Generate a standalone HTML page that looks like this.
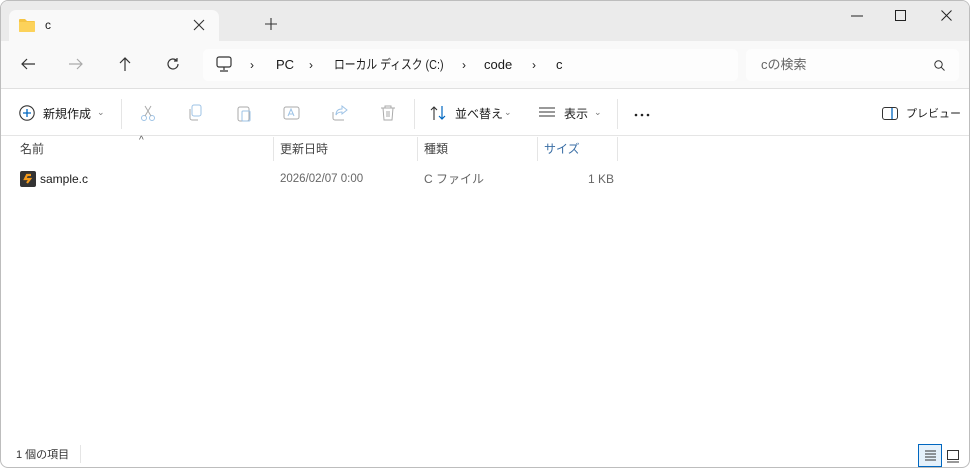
<!DOCTYPE html><html><head><meta charset="utf-8"><style>
*{margin:0;padding:0;box-sizing:border-box}
body{width:970px;height:468px;overflow:hidden;background:#fff;font-family:"Liberation Sans","Noto Sans CJK JP",sans-serif;font-size:12px;color:#1a1a1a;position:relative}
.win{position:absolute;left:0;top:0;width:970px;height:468px;border:1px solid #bdbdbd;border-radius:8px;overflow:hidden;background:#fff}
.title{position:absolute;left:0;top:0;width:970px;height:40px;background:#ebebeb}
.tab{position:absolute;left:8px;top:9px;width:210px;height:31px;background:#f9f9f9;border-radius:7px 7px 0 0}
.nav{position:absolute;left:0;top:40px;width:970px;height:48px;background:#f9f9f9;border-bottom:1px solid #e0e0e0}
.addr{position:absolute;left:202px;top:8px;width:535px;height:32px;background:#fdfdfd;border-radius:5px}
.search{position:absolute;left:745px;top:8px;width:213px;height:32px;background:#fdfdfd;border-radius:5px}
.t{position:absolute;white-space:nowrap;line-height:14px;height:14px}
.tool{position:absolute;left:0;top:88px;width:970px;height:47px;border-bottom:1px solid #e5e5e5}
.sep{position:absolute;width:1px;background:#e5e5e5}
svg{position:absolute}
</style></head><body><div class="win">
<div class="title">
<div class="tab">
<svg style="left:10px;top:8px" width="16" height="14"><path d="M0 2a1 1 0 0 1 1-1h5l2 2h7a1 1 0 0 1 1 1v9a1 1 0 0 1-1 1H1a1 1 0 0 1-1-1z" fill="#f5c443"/><path d="M0 4h16v9a1 1 0 0 1-1 1H1a1 1 0 0 1-1-1z" fill="#fcd25a"/></svg>
<span class="t" style="left:36px;top:8px;font-size:12px">c</span>
<svg style="left:184px;top:9px" width="12" height="12"><path d="M1 1l10 10M11 1L1 11" stroke="#333" stroke-width="1.1"/></svg>
</div>
<svg style="left:264px;top:17px" width="12" height="12"><path d="M6 0v12M0 6h12" stroke="#333" stroke-width="1.1"/></svg>
<svg style="left:850px;top:14px" width="12" height="2"><path d="M0 1h12" stroke="#222"/></svg>
<svg style="left:894px;top:9px" width="11" height="11"><rect x=".5" y=".5" width="10" height="10" fill="none" stroke="#222"/></svg>
<svg style="left:940px;top:9px" width="11" height="11"><path d="M.5.5l10 10M10.5.5l-10 10" stroke="#222"/></svg>
</div>
<div class="nav">
<svg style="left:19px;top:15px" width="16" height="16"><path d="M15 8H2M7 3L2 8l5 5" stroke="#333" stroke-width="1.2" fill="none"/></svg>
<svg style="left:67px;top:15px" width="16" height="16"><path d="M1 8h13M9 3l5 5-5 5" stroke="#aaa" stroke-width="1.2" fill="none"/></svg>
<svg style="left:116px;top:15px" width="16" height="16"><path d="M8 15V2M3 7l5-5 5 5" stroke="#333" stroke-width="1.2" fill="none"/></svg>
<svg style="left:164px;top:15px" width="16" height="16"><path d="M13 8a5 5 0 1 1-1.5-3.6M12 2v3H9" stroke="#333" stroke-width="1.2" fill="none"/></svg>
<div class="addr">
<svg style="left:13px;top:7px" width="16" height="18"><rect x="1" y="1" width="14" height="10" rx="2" fill="none" stroke="#333" stroke-width="1.2"/><path d="M8 11v3M4 15h8" stroke="#333" stroke-width="1.2"/></svg>
<span class="t" style="left:47px;top:9px">›</span>
<span class="t" style="left:73px;top:9px;font-size:13px">PC</span>
<span class="t" style="left:106px;top:9px">›</span>
<span class="t" style="left:131px;top:9px;font-size:13px;transform:scaleX(0.83);transform-origin:left">ローカル ディスク (C:)</span>
<span class="t" style="left:259px;top:9px">›</span>
<span class="t" style="left:281px;top:9px;font-size:13px">code</span>
<span class="t" style="left:329px;top:9px">›</span>
<span class="t" style="left:353px;top:9px;font-size:13px">c</span>
</div>
<div class="search">
<span class="t" style="left:15px;top:9px;font-size:13px;color:#666">cの検索</span>
<svg style="left:188px;top:11px" width="11" height="11"><circle cx="4.5" cy="4.5" r="3.7" fill="none" stroke="#333"/><path d="M7.3 7.3l3.2 3.2" stroke="#333"/></svg>
</div>
</div>
<div class="tool">
<svg style="left:18px;top:16px" width="16" height="16"><circle cx="8" cy="8" r="7.2" fill="none" stroke="#333" stroke-width="1.1"/><path d="M8 4v8M4 8h8" stroke="#0067c0" stroke-width="1.3"/></svg>
<span class="t" style="left:42px;top:18px">新規作成</span>
<span class="t" style="left:96px;top:16px;font-size:9px;color:#777">⌄</span>
<div class="sep" style="left:120px;top:10px;height:30px"></div>
<svg style="left:138px;top:15px" width="18" height="18"><circle cx="5" cy="14" r="2.5" fill="none" stroke="#9ec3e6"/><circle cx="13" cy="14" r="2.5" fill="none" stroke="#9ec3e6"/><path d="M6 12L12 2M12 12L6 2" stroke="#aaa"/></svg>
<svg style="left:186px;top:15px" width="18" height="18"><rect x="5" y="1" width="9" height="11" rx="2" fill="none" stroke="#9ec3e6"/><path d="M3 5v9a2 2 0 0 0 2 2h6" stroke="#aaa" fill="none"/></svg>
<svg style="left:234px;top:15px" width="18" height="18"><rect x="3" y="3" width="11" height="14" rx="2" fill="none" stroke="#aaa"/><rect x="7" y="7" width="8" height="10" rx="1" fill="none" stroke="#9ec3e6"/></svg>
<svg style="left:282px;top:15px" width="18" height="18"><rect x="1" y="3" width="15" height="12" rx="2" fill="none" stroke="#aaa"/><path d="M5 12l3-7 3 7M6 10h4" stroke="#9ec3e6" fill="none"/></svg>
<svg style="left:330px;top:15px" width="18" height="18"><path d="M2 8v6a2 2 0 0 0 2 2h9" stroke="#aaa" fill="none"/><path d="M11 2l5 4-5 4V8c-3 0-5 1-6 3 0-4 2-6 6-6z" stroke="#9ec3e6" fill="none"/></svg>
<svg style="left:378px;top:15px" width="18" height="18"><path d="M2 4h14M6 4V2h6v2M4 4l1 12h8l1-12M8 7v6M10 7v6" stroke="#aaa" fill="none"/></svg>
<div class="sep" style="left:413px;top:10px;height:30px"></div>
<svg style="left:429px;top:16px" width="18" height="16"><path d="M4 15V2M1 5l3-3 3 3" stroke="#333" fill="none" stroke-width="1.1"/><path d="M12 1v13M9 11l3 3 3-3" stroke="#0067c0" fill="none" stroke-width="1.2"/></svg>
<span class="t" style="left:454px;top:18px">並べ替え</span>
<span class="t" style="left:503px;top:16px;font-size:9px;color:#777">⌄</span>
<svg style="left:538px;top:18px" width="16" height="12"><path d="M0 1h16M0 5h16M0 9h16" stroke="#333" stroke-width="1.1"/></svg>
<span class="t" style="left:563px;top:18px">表示</span>
<span class="t" style="left:593px;top:16px;font-size:9px;color:#777">⌄</span>
<div class="sep" style="left:616px;top:10px;height:30px"></div>
<svg style="left:633px;top:24px" width="18" height="4"><circle cx="2" cy="2" r="1.3" fill="#222"/><circle cx="8" cy="2" r="1.3" fill="#222"/><circle cx="14" cy="2" r="1.3" fill="#222"/></svg>
<svg style="left:881px;top:18px" width="18" height="14"><rect x=".5" y=".5" width="15" height="12" rx="2.5" fill="none" stroke="#333"/><path d="M10 1v11" stroke="#0067c0" stroke-width="1.3"/></svg>
<span class="t" style="left:905px;top:18px;font-size:11px">プレビュー</span>
</div>
<span class="t" style="left:138px;top:133px;font-size:10px;color:#555">^</span>
<div class="sep" style="left:272px;top:136px;height:24px"></div>
<div class="sep" style="left:416px;top:136px;height:24px"></div>
<div class="sep" style="left:536px;top:136px;height:24px"></div>
<div class="sep" style="left:616px;top:136px;height:24px"></div>
<span class="t" style="left:19px;top:141px;color:#444">名前</span>
<span class="t" style="left:279px;top:141px;color:#444">更新日時</span>
<span class="t" style="left:423px;top:141px;color:#444">種類</span>
<span class="t" style="left:543px;top:141px;color:#3a6ea5">サイズ</span>
<svg style="left:19px;top:170px" width="16" height="16"><rect width="16" height="16" rx="2" fill="#333"/><path d="M11 4H7L5 8h5l-3 4" stroke="#f39a1b" stroke-width="2.2" fill="none"/></svg>
<span class="t" style="left:39px;top:171px">sample.c</span>
<span class="t" style="left:279px;top:171px;color:#666;font-size:11.5px">2026/02/07 0:00</span>
<span class="t" style="left:423px;top:171px;color:#666">C ファイル</span>
<span class="t" style="left:587px;top:171px;color:#666">1 KB</span>
<span class="t" style="left:15px;top:447px;font-size:11px;color:#333">1 個の項目</span>
<div class="sep" style="left:79px;top:444px;height:18px"></div>
<div style="position:absolute;left:917px;top:443px;width:24px;height:23px;background:#e5f1fb;border:1px solid #0067c0"></div>
<svg style="left:924px;top:449px" width="11" height="12"><path d="M0 1h11M0 4h11M0 7h11M0 10h11" stroke="#333"/></svg>
<svg style="left:946px;top:449px" width="12" height="13"><rect x=".5" y=".5" width="11" height="9" fill="none" stroke="#333"/><path d="M0 12h12" stroke="#333"/></svg>
</div></body></html>
